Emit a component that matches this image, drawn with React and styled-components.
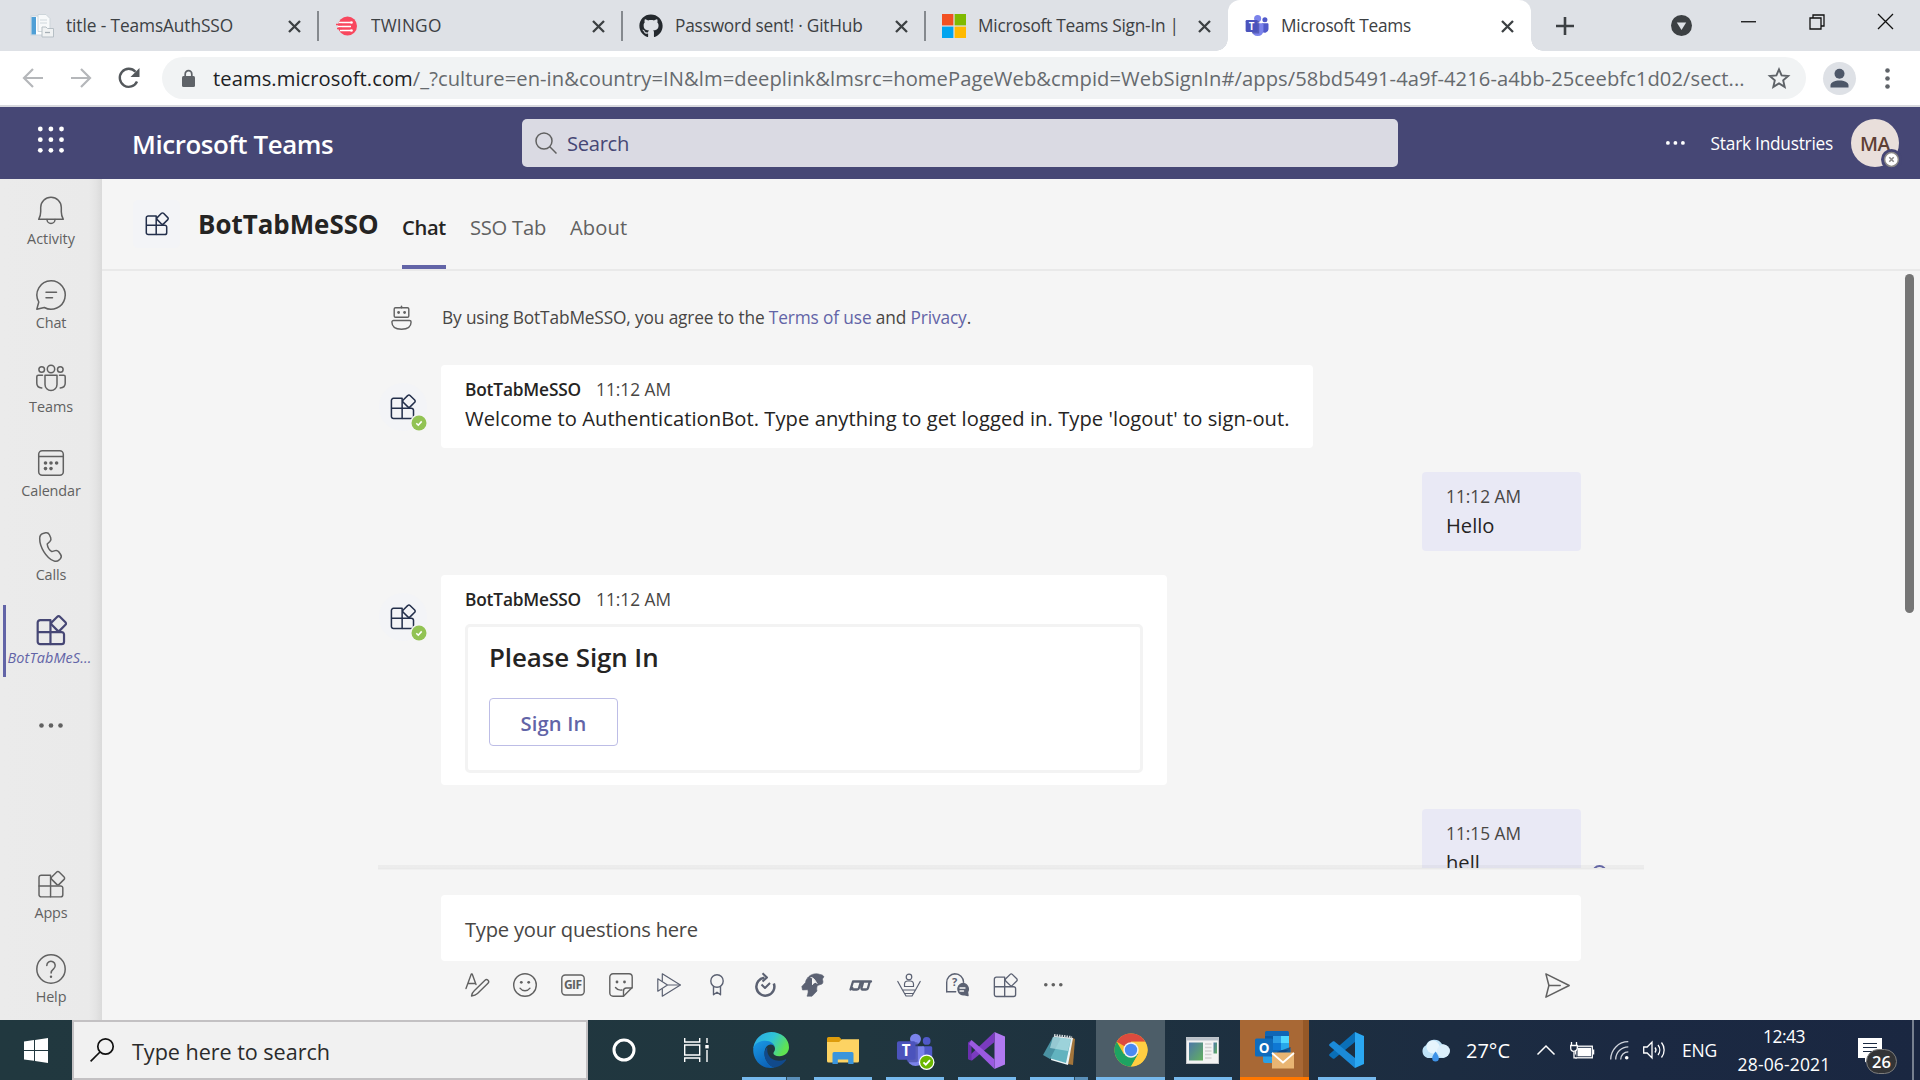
import React from "react";
import styled, { createGlobalStyle, css } from "styled-components";
import { FaGithub } from "react-icons/fa";

const Global = createGlobalStyle`
  * { box-sizing: border-box; }
  html, body { margin: 0; padding: 0; }
  body {
    width: 1920px; height: 1080px; overflow: hidden;
    font-family: "Open Sans", "Noto Sans", sans-serif;
    background: #f5f5f5;
  }
  svg { display: block; flex: none; overflow: visible; }
`;

const Screen = styled.div`
  width: 1920px;
  height: 1080px;
  display: flex;
  flex-direction: column;
  overflow: hidden;
`;

/* ---------- Browser chrome ---------- */
const TabStrip = styled.div`
  height: 51px;
  flex: none;
  display: flex;
  align-items: stretch;
  background: #dee1e6;
  padding-left: 15px;
`;
const BrowserTab = styled.div`
  position: relative;
  flex: none;
  width: ${(p) => p.$w || 303}px;
  display: flex;
  align-items: center;
  padding: 1px 17px 0 ${(p) => p.$pad || 17}px;
  gap: 12px;
  ${(p) =>
    p.$sep &&
    css`
      &::after {
        content: "";
        position: absolute;
        right: -1px;
        top: 11px;
        width: 2px;
        height: 30px;
        background: #85898e;
      }
    `}
  ${(p) =>
    p.$active &&
    css`
      background: #fff;
      border-radius: 12px 12px 0 0;
      &::before,
      &::after {
        content: "";
        position: absolute;
        bottom: 0;
        width: 12px;
        height: 12px;
      }
      &::before {
        left: -12px;
        background: radial-gradient(circle at 0 0, transparent 11.5px, #fff 12px);
      }
      &::after {
        right: -12px;
        background: radial-gradient(circle at 100% 0, transparent 11.5px, #fff 12px);
      }
    `}
`;
const Favicon = styled.div`
  width: 24px;
  height: 24px;
  flex: none;
`;
const TabTitle = styled.span`
  flex: 1;
  white-space: pre;
  overflow: hidden;
  font-size: 17.3px;
  line-height: 26px;
  margin-top: -1px;
  letter-spacing: ${(p) => p.$ls}px;
  color: #3c4043;
`;
const StripControls = styled.div`
  flex: 1;
  display: flex;
  align-items: flex-start;
`;
const NewTab = styled.div`
  width: 67px;
  height: 51px;
  display: flex;
  align-items: center;
  justify-content: center;
`;
const TabSearch = styled(NewTab)`
  width: 66px;
  margin-left: 50px;
`;
const CaptionButton = styled.div`
  width: 68.6px;
  height: 43px;
  display: flex;
  align-items: center;
  justify-content: center;
`;

const AddressBar = styled.div`
  height: 56px;
  flex: none;
  display: flex;
  align-items: center;
  background: #fff;
  border-bottom: 2px solid #d8d9de;
  padding-left: 21px;
`;
const NavIcons = styled.div`
  width: 141px;
  display: flex;
  gap: 24px;
`;
const UrlPill = styled.div`
  width: 1644px;
  height: 42px;
  border-radius: 21px;
  background: #f1f3f4;
  display: flex;
  align-items: center;
  padding: 0 15px 0 20px;
`;
const Url = styled.span`
  flex: 1;
  margin-left: 18px;
  font-size: 20.16px;
  letter-spacing: 0.071px;
  white-space: pre;
  color: #666a6e;
  b {
    font-weight: 400;
    color: #202124;
  }
`;
const Profile = styled.div`
  width: 33px;
  height: 33px;
  margin-left: 17px;
  border-radius: 50%;
  overflow: hidden;
  background: #dee1e6;
`;
const Kebab = styled.div`
  margin-left: 29px;
`;

/* ---------- Teams header ---------- */
const TeamsBar = styled.header`
  height: 72px;
  flex: none;
  display: flex;
  align-items: center;
  background: #464775;
  color: #fff;
  padding: 0 21px 0 37px;
`;
const Waffle = styled.div`
  width: 95px;
  padding-bottom: 6px;
`;
const Brand = styled.span`
  width: 390px;
  font-size: 25.9px;
  font-weight: 600;
  letter-spacing: -0.42px;
  padding-top: 2px;
`;
const SearchBox = styled.div`
  width: 876px;
  height: 48px;
  border-radius: 5px;
  background: #dadae3;
  display: flex;
  align-items: center;
  gap: 10px;
  padding-left: 13px;
  font-size: 20.16px;
  letter-spacing: -0.307px;
  color: #464775;
`;
const HeaderRight = styled.div`
  flex: 1;
  display: flex;
  align-items: center;
  justify-content: flex-end;
`;
const Org = styled.span`
  font-size: 17.3px;
  letter-spacing: -0.24px;
  margin: 0 18px 0 26px;
`;
const Avatar = styled.div`
  position: relative;
  width: 48px;
  height: 48px;
  border-radius: 50%;
  background: #e9dfdb;
  color: #5e4034;
  display: flex;
  align-items: center;
  justify-content: center;
  font-size: 19.5px;
  font-weight: 600;
  letter-spacing: -0.4px;
`;
const AvatarBadge = styled.div`
  position: absolute;
  right: -3px;
  bottom: -3px;
`;

/* ---------- Body ---------- */
const Body = styled.div`
  height: 841px;
  flex: none;
  display: flex;
`;
const Rail = styled.nav`
  width: 102px;
  flex: none;
  display: flex;
  flex-direction: column;
  gap: 12px;
  padding: 6px 0 5px;
  background: linear-gradient(90deg, #ebebeb 0, #eaeaea 89px, #e4e4e4 96px, #dadada 102px);
`;
const RailItem = styled.div`
  position: relative;
  height: 72px;
  flex: none;
  display: flex;
  flex-direction: column;
  align-items: center;
  padding-top: 11px;
  color: ${(p) => (p.$active ? "#464775" : "#616161")};
  margin-top: ${(p) => (p.$push ? "auto" : 0)};
  ${(p) =>
    p.$active &&
    css`
      padding-top: 10px;
      &::before {
        content: "";
        position: absolute;
        left: 3px;
        top: 0;
        width: 3px;
        height: 72px;
        background: #6264a7;
      }
    `}
`;
const RailLabel = styled.span`
  margin-top: ${(p) => (p.$active ? 2 : 3)}px;
  font-size: 14.4px;
  line-height: 20px;
  white-space: pre;
  letter-spacing: ${(p) => p.$ls}px;
  ${(p) =>
    p.$active &&
    css`
      font-style: italic;
      color: #6264a7;
      margin-left: -3px;
    `}
`;
const RailMore = styled.div`
  height: 72px;
  display: flex;
  align-items: center;
  justify-content: center;
`;

const Main = styled.main`
  flex: 1;
  display: flex;
  flex-direction: column;
  background: #f5f5f5;
  min-width: 0;
`;
const AppHeader = styled.div`
  height: 92px;
  flex: none;
  display: flex;
  align-items: stretch;
  border-bottom: 2px solid #e9e9e9;
  padding-left: 31px;
`;
const AppTile = styled.div`
  width: 47px;
  height: 48px;
  align-self: center;
  border-radius: 5px;
  background: #f3f4f7;
  display: flex;
  align-items: center;
  justify-content: center;
  color: #232f4b;
`;
const AppTitle = styled.h1`
  margin: 0 24px 0 18px;
  width: 180px;
  align-self: center;
  font-size: 25.9px;
  font-weight: 700;
  line-height: 36px;
  letter-spacing: 0;
  color: #252423;
`;
const AppTab = styled.div`
  display: flex;
  align-items: center;
  width: ${(p) => p.$w}px;
  margin-right: 24px;
  padding-top: 10px;
  border-bottom: 4px solid ${(p) => (p.$active ? "#6264a7" : "transparent")};
  font-size: 20.16px;
  white-space: pre;
  font-weight: ${(p) => (p.$active ? 600 : 400)};
  color: ${(p) => (p.$active ? "#252423" : "#616161")};
  letter-spacing: ${(p) => p.$ls}px;
`;

const ChatScroll = styled.div`
  height: 597px;
  flex: none;
  overflow: hidden;
  display: flex;
  justify-content: center;
  position: relative;
`;
const Scrollbar = styled.div`
  position: absolute;
  right: 6px;
  top: 3px;
  width: 9px;
  height: 339px;
  border-radius: 5px;
  background: #757575;
`;
const ChatColumn = styled.div`
  width: 1266px;
  display: flex;
  flex-direction: column;
  gap: 24px;
`;
const Intro = styled.div`
  height: 70px;
  flex: none;
  padding-top: 24px;
  display: flex;
  align-items: center;
  color: #616161;
`;
const Gutter = styled.div`
  width: 63px;
  flex: none;
  position: relative;
`;
const IntroGutter = styled(Gutter)`
  padding-left: 13px;
`;
const IntroText = styled.p`
  margin: 0;
  padding-left: 1px;
  font-size: 17.3px;
  line-height: 24px;
  letter-spacing: -0.134px;
  color: #484644;
`;
const Link = styled.a`
  color: #6264a7;
`;
const MessageRow = styled.div`
  display: flex;
  flex: none;
  justify-content: ${(p) => (p.$mine ? "flex-end" : "flex-start")};
  align-items: flex-start;
`;
const BotAvatar = styled.div`
  position: relative;
  width: 48px;
  height: 48px;
  margin-top: 18px;
  margin-left: 1px;
  border-radius: 50%;
  background: #f3f4f7;
  display: flex;
  align-items: center;
  justify-content: center;
  color: #232f4b;
`;
const Presence = styled.div`
  position: absolute;
  left: 31px;
  top: 31px;
`;
const Bubble = styled.div`
  width: ${(p) => p.$w}px;
  background: ${(p) => (p.$mine ? "#e9e9f5" : "#fff")};
  border-radius: 4px;
  padding: 12px 24px ${(p) => p.$pb}px;
`;
const Meta = styled.div`
  display: flex;
  gap: 15px;
  height: 24px;
  align-items: center;
  font-size: 17.3px;
  color: #484644;
`;
const Sender = styled.span`
  width: 116px;
  font-weight: 600;
  letter-spacing: -0.165px;
  color: #252423;
`;
const MessageText = styled.div`
  margin-top: 2px;
  font-size: 20.16px;
  line-height: 30px;
  white-space: pre;
  letter-spacing: ${(p) => p.$ls}px;
  color: #252423;
`;
const Card = styled.div`
  margin-top: 13px;
  height: 149px;
  border: 3px solid #f3f3f3;
  border-radius: 5px;
  padding: 12px 20px 0 21px;
`;
const CardTitle = styled.div`
  font-size: 25.9px;
  line-height: 36px;
  font-weight: 600;
  letter-spacing: -0.08px;
  color: #252423;
`;
const CardButton = styled.div`
  margin-top: 23px;
  width: 129px;
  height: 48px;
  border: 1.5px solid #bdbde6;
  border-radius: 4px;
  display: flex;
  align-items: center;
  justify-content: center;
  padding-top: 1px;
  font-size: 20.16px;
  font-weight: 600;
  letter-spacing: 0.16px;
  color: #6264a7;
`;
const Receipt = styled.div`
  width: 15px;
  height: 15px;
  margin: 56px 0 0 11px;
  border: 2px solid #6264a7;
  border-radius: 50%;
`;

const Composer = styled.section`
  flex: 1;
  width: 1266px;
  align-self: center;
  padding: 0 63px;
  display: flex;
  flex-direction: column;
`;
const Divider = styled.div`
  height: 5px;
  margin: -3px -63px 25px;
  position: relative;
  background: linear-gradient(180deg, rgba(120, 120, 120, 0.07) 0 3px, #e9e9e9 3px 4px, #f0f0f0 4px);
`;
const Input = styled.div`
  height: 66px;
  border-radius: 4px;
  background: #fff;
  display: flex;
  align-items: center;
  padding-left: 24px;
  padding-top: 2px;
  font-size: 20.16px;
  letter-spacing: -0.235px;
  color: #484644;
`;
const Tools = styled.div`
  height: 48px;
  padding: 0 0 0 12px;
  display: flex;
  align-items: center;
`;
const Tool = styled.div`
  width: 48px;
  height: 48px;
  display: flex;
  align-items: center;
  justify-content: center;
  color: ${(p) => (p.$c ? "#5b6172" : "#616161")};
  margin-left: ${(p) => (p.$end ? "auto" : 0)};
`;

/* ---------- Taskbar ---------- */
const Taskbar = styled.footer`
  height: 60px;
  flex: none;
  display: flex;
  background: linear-gradient(90deg, #21383f 0, #20363f 45%, #1d2f40 66%, #1b2942 85%, #1a2741 100%);
  color: #fff;
`;
const StartButton = styled.div`
  width: 72px;
  flex: none;
  display: flex;
  align-items: center;
  justify-content: center;
`;
const TaskSearch = styled.div`
  width: 516px;
  flex: none;
  border: 2px solid #c3c1c3;
  background: #f1f1f1;
  display: flex;
  align-items: center;
  gap: 18px;
  padding-left: 16px;
  color: #2b2b2b;
  font-size: 21.6px;
  letter-spacing: -0.04px;
  span {
    padding-top: 2px;
  }
`;
const TaskTools = styled.div`
  width: 148px;
  flex: none;
  display: flex;
`;
const TaskCell = styled.div`
  width: 72px;
  flex: none;
  display: flex;
  align-items: center;
  justify-content: center;
`;
const TaskApp = styled.div`
  width: 69px;
  margin-right: 3px;
  flex: none;
  display: flex;
  flex-direction: column;
  align-items: center;
  background: ${(p) => p.$bg || "transparent"};
  box-shadow: ${(p) => (p.$stack ? "inset -6px 0 0 rgba(90,40,0,.25)" : "none")};
`;
const TaskIcon = styled.div`
  height: 57px;
  padding-top: 3px;
  display: flex;
  align-items: center;
  justify-content: center;
`;
const Running = styled.div`
  height: 3px;
  width: ${(p) => (p.$full ? 69 : 58)}px;
  background: ${(p) =>
    p.$multi
      ? "linear-gradient(90deg, #76b9ed 0 44px, #2b4a5c 44px 45px, #5a8fb8 45px)"
      : p.$alert
      ? "#ff7700"
      : "#76b9ed"};
`;
const Tray = styled.div`
  flex: 1;
  display: flex;
  align-items: center;
  padding-left: 36px;
`;
const Temp = styled.span`
  width: 70px;
  margin-left: 15px;
  margin-right: 1px;
  font-size: 20px;
`;
const TraySlot = styled.div`
  width: ${(p) => p.$w}px;
  flex: none;
`;
const Lang = styled.span`
  width: 55px;
  font-size: 17.5px;
  letter-spacing: -0.2px;
`;
const Clock = styled.div`
  width: 94px;
  display: flex;
  flex-direction: column;
  align-items: center;
  font-size: 17.5px;
  line-height: 28px;
  letter-spacing: 0.15px;
  white-space: nowrap;
`;
const Time = styled.span`
  letter-spacing: -0.5px;
`;
const ActionCenter = styled.div`
  position: relative;
  width: 54px;
  margin-left: 27px;
`;
const Count = styled.div`
  position: absolute;
  left: 8px;
  top: 11px;
  width: 31px;
  height: 25px;
  border-radius: 13px;
  border: 1px solid #7c7c7c;
  background: #333436;
  display: flex;
  align-items: center;
  justify-content: center;
  font-size: 16.5px;
  font-weight: 600;
`;
const ShowDesktop = styled.div`
  width: 8px;
  height: 60px;
  border-left: 2px solid #76808f;
`;

/* ---------- Icons ---------- */
const Close = () => (
  <svg width="13" height="13" viewBox="0 0 13 13" stroke="#3c4043" strokeWidth="2.3">
    <path d="M1 1l11 11M12 1L1 12" />
  </svg>
);

const Blocks = ({ size = 24, sw = 1.3 }) => (
  <svg width={size} height={size} viewBox="0 0 24 24" fill="none" stroke="currentColor" strokeWidth={sw} strokeLinejoin="round">
    <path d="M3.200 4h8v18.600H3.200a1.900 1.900 0 0 1-1.900-1.900V5.900A1.900 1.900 0 0 1 3.200 4z" />
    <path d="M1.300 13.200h18.500a1.900 1.900 0 0 1 1.900 1.900v5.600a1.900 1.900 0 0 1-1.900 1.900h-8.600" />
    <path d="M16.500 1.300a1.400 1.400 0 0 1 2 0l4.300 4.300a1.400 1.400 0 0 1 0 2l-4.300 4.300a1.400 1.400 0 0 1-2 0l-4.300-4.300a1.400 1.400 0 0 1 0-2z" />
  </svg>
);

const TeamsLogo = ({ size, badge }) => (
  <svg width={size} height={size} viewBox="0 0 38 38">
    <circle cx="31.500" cy="9.200" r="4" fill="#5059c9" />
    <circle cx="20" cy="7.300" r="5.600" fill="#7b83eb" />
    <path d="M27 14.600h8.600c.9 0 1.600.7 1.600 1.600v8a5.600 5.600 0 0 1-10.200 3z" fill="#5059c9" />
    <path d="M11 14.600h16.600c.9 0 1.600.7 1.600 1.600v10.800a9.200 9.200 0 0 1-18.200 0z" fill="#7b83eb" />
    <rect x="11" y="10.500" width="11.500" height="20.500" rx="1.500" fill="#3b3f91" opacity=".55" />
    <rect x="1" y="9.500" width="19" height="19" rx="1.800" fill="#4b53bc" />
    <text x="10.500" y="24.600" fontSize="15.500" fontWeight="700" fontFamily="Open Sans" textAnchor="middle" fill="#fff">T</text>
    {badge && (
      <g>
        <circle cx="31.500" cy="31" r="8" fill="#fff" />
        <circle cx="31.500" cy="31" r="6.700" fill="#6bb700" />
        <path d="M28.200 31.200l2.400 2.400 4.300-4.600" fill="none" stroke="#fff" strokeWidth="1.900" />
      </g>
    )}
  </svg>
);

const DocIcon = () => (
  <svg width="24" height="24" viewBox="0 0 24 24">
    <rect x="1" y="2" width="15" height="19" fill="#fff" stroke="#c9d3db" />
    <rect x="1.500" y="3" width="4.500" height="17.500" fill="#4f9fd6" />
    <path d="M8 .5h8l4 4v13H8z" fill="#f7f9fa" stroke="#cdd5da" />
    <path d="M10 6h7M10 9h7" stroke="#d0d8dd" />
    <path d="M12 13h4l1.500 1.500h6v8.500H12z" fill="#f0f2f3" stroke="#b6bfc5" />
    <path d="M15 18.500h5" stroke="#a5aeb5" strokeWidth="1.300" />
  </svg>
);

const TwingoIcon = () => (
  <svg width="24" height="24" viewBox="0 0 24 24">
    <circle cx="12.500" cy="12" r="9.500" fill="#f8475e" />
    <path d="M4 8.500h12M3 12.500h13M5 16.500h11" stroke="#fff" strokeWidth="1.500" />
    <circle cx="16.500" cy="8.500" r="1.300" fill="#fff" />
    <circle cx="16.500" cy="16.500" r="1.300" fill="#fff" />
    <path d="M1 10.500h6M2 14.500h5" stroke="#f8475e" strokeWidth="1.500" />
  </svg>
);

const MsIcon = () => (
  <svg width="24" height="24" viewBox="0 0 24 24">
    <path fill="#f25022" d="M0 0h11.400v11.400H0z" />
    <path fill="#7fba00" d="M12.600 0H24v11.400H12.600z" />
    <path fill="#00a4ef" d="M0 12.600h11.400V24H0z" />
    <path fill="#ffb900" d="M12.600 12.600H24V24H12.600z" />
  </svg>
);

const line = { fill: "none", stroke: "currentColor", strokeWidth: 1.5, strokeLinejoin: "round", strokeLinecap: "round" };
const RailSvg = ({ children }) => (
  <svg width="30" height="30" viewBox="0 0 30 30" {...line}>
    {children}
  </svg>
);
const RailIcons = {
  activity: (
    <RailSvg>
      <path d="M2.700 23.300h24.600c-1.600-2.800-2-4.600-2-7.500v-4.300a10.300 10.300 0 0 0-20.600 0v4.300c0 2.900-.4 4.700-2 7.500z" />
      <path d="M11 23.500a4 4 0 0 0 8 0" />
    </RailSvg>
  ),
  chat: (
    <RailSvg>
      <path d="M15 .8a14.200 14.200 0 1 1-6.700 26.700L.8 29.200 2.800 22A14.200 14.200 0 0 1 15 .8z" />
      <path d="M10 12.300h10.500M10 17.800h6.500" />
    </RailSvg>
  ),
  teams: (
    <RailSvg>
      <circle cx="15" cy="5" r="3.700" />
      <circle cx="5.700" cy="5.500" r="2.800" />
      <circle cx="24.300" cy="5.500" r="2.800" />
      <path d="M9 11.200h12v9.300a6 6 0 0 1-12 0z" />
      <path d="M6.500 11.200H2.300A1.500 1.500 0 0 0 .8 12.700v6.600c0 2.800 2 4.500 5 4.700M23.500 11.200h4.200a1.500 1.500 0 0 1 1.500 1.500v6.600c0 2.800-2 4.500-5 4.700" />
    </RailSvg>
  ),
  calendar: (
    <RailSvg>
      <rect x="2.700" y="2.700" width="24.600" height="24.600" rx="3.500" />
      <path d="M2.700 8.500h24.600" />
      <g fill="currentColor" stroke="none">
        <circle cx="9.500" cy="15" r="1.800" />
        <circle cx="15" cy="15" r="1.800" />
        <circle cx="20.600" cy="15" r="1.800" />
        <circle cx="9.500" cy="20.600" r="1.800" />
        <circle cx="15" cy="20.600" r="1.800" />
      </g>
    </RailSvg>
  ),
  calls: (
    <RailSvg>
      <path d="M7 1.400l2.600-.6c1.600-.4 3.100.4 3.800 1.900l1.300 3c.5 1.300.2 2.800-.8 3.800l-2.700 2.500c.3 2.700 2.300 6.200 4.600 7.600l3.400-1c1.300-.4 2.700.1 3.500 1.200l1.900 2.700c.9 1.300.8 3-.3 4.200l-1 1c-1.400 1.500-3.600 2-5.500 1.200C10 26 3.600 14.500 3.700 6.500c0-2.400 1.200-4.600 3.300-5.100z" />
    </RailSvg>
  ),
  apps: <Blocks size={28} sw={1.250} />,
  help: (
    <RailSvg>
      <circle cx="15" cy="15" r="14.200" />
      <path d="M10.800 11.500a4.200 4.200 0 1 1 6.800 3.300c-1.500 1.200-2.500 2-2.500 4.200" />
      <circle cx="15" cy="22.800" r="1.200" fill="currentColor" stroke="none" />
    </RailSvg>
  ),
  bot: <Blocks size={31} sw={1.700} />,
};

const ToolSvg = ({ children, ...p }) => (
  <svg width="24" height="24" viewBox="0 0 24 24" {...line} strokeWidth="1.400" {...p}>
    {children}
  </svg>
);
const Dots = ({ r = 1.6, gap = 7.5 }) => (
  <svg width={gap * 2 + r * 2} height={r * 2} fill="currentColor">
    <circle cx={r} cy={r} r={r} />
    <circle cx={r + gap} cy={r} r={r} />
    <circle cx={r + gap * 2} cy={r} r={r} />
  </svg>
);

const toolIcons = [
  [0, <ToolSvg key="f"><path d="M1 15.500L6.300 1h.9L11 11.500M3 10.500h7" /><path d="M9.500 17.500L20 7.300a2.100 2.100 0 0 1 3 3L12.500 20.500c-1.500 1.500-3.500 2.300-6 2.500.2-2.300 1.300-4 3-5.500z" /></ToolSvg>],
  [0, <ToolSvg key="e"><circle cx="12" cy="12" r="11.300" /><path d="M7 15.200c2.300 3.300 7.700 3.300 10 0" /><g fill="currentColor" stroke="none"><circle cx="8.300" cy="9.300" r="1.400" /><circle cx="15.700" cy="9.300" r="1.400" /></g></ToolSvg>],
  [0, <ToolSvg key="g"><rect x=".8" y="2" width="22.400" height="20" rx="3.500" /><text x="12" y="16.300" fontSize="12" fontWeight="700" stroke="none" fill="currentColor" textAnchor="middle" fontFamily="Open Sans" textLength="18">GIF</text></ToolSvg>],
  [0, <ToolSvg key="s"><path d="M4 .8h16a3.200 3.200 0 0 1 3.200 3.200v10.500l-8.700 8.700H4A3.200 3.200 0 0 1 .8 20V4A3.200 3.200 0 0 1 4 .8z" /><path d="M23 15h-5.500a3 3 0 0 0-3 3v5M6.500 14.500c1.500 2 4 3 6.500 2.500" /><g fill="currentColor" stroke="none"><circle cx="8" cy="9" r="1.400" /><circle cx="15.500" cy="9" r="1.400" /></g></ToolSvg>],
  [1, <ToolSvg key="m" strokeWidth="1.200"><path d="M5.300 8V.8L23.400 12 5.300 23.200V16" /><path d="M.8 5.800L10.500 12 .8 18.200zM10.500 12h12.500" /></ToolSvg>],
  [1, <ToolSvg key="p"><circle cx="12" cy="8" r="6.200" /><path d="M8.500 13.500v8.300l3.500-2.600 3.500 2.600v-8.300" /></ToolSvg>],
  [1, <ToolSvg key="u" strokeWidth="2.500" strokeLinecap="butt"><path d="M20.800 10.500A9 9 0 1 1 11.500 4.700" /><path d="M9.500.3l4.500 4.200-4.500 4M8.500 11.500l3.500 3.500 5-5" strokeWidth="2" /></ToolSvg>],
  [1, <ToolSvg key="d"><path d="M7 4.500C10 .5 16 0 19 1.500c2 .2 3.500 1 4 2.500-1 .8-1.500 1.500-1.500 2.700.8 1.800.5 3.500-.5 4.300l-4.500 1.500c-.8 1.500-1 3.500-.5 5.500l-5 5.200H6c1-2.500 1.500-4.500.8-6.500L1.500 17 .8 13.500 4.500 9.500C4.800 7.500 5.500 6 7 4.500z" fill="currentColor" strokeWidth=".6" /><path d="M10 4.500c2.500 0 3.500 2 6 6M14.500 9.500l-3-3.500v5.500" stroke="#f5f5f5" fill="#f5f5f5" strokeWidth="1" /></ToolSvg>],
  [1, <ToolSvg key="o" strokeWidth="2.300"><path d="M1.500 16.500L4 8.500h8L10 15c-.3 1-1 1.500-2 1.500H4.500c-1 0-1.500-.8-1.200-1.700M12 8.500h10M14.300 8.500L12.500 15c-.2 1 .2 1.500 1 1.500h3.500c1 0 1.800-.5 2-1.500l1.800-6.500" /></ToolSvg>],
  [1, <ToolSvg key="h" strokeWidth="1.200"><circle cx="12" cy="4" r="2.800" /><path d="M7.500 13.500v-2.200a3.300 3.300 0 0 1 3.300-3.300h2.400a3.300 3.300 0 0 1 3.300 3.300v2.200zM.8 8.500L5.500 17h13l4.700-8.500M5.500 17l3.500 6h6l3.500-6M8 20.500h8" /></ToolSvg>],
  [1, <ToolSvg key="q"><path d="M10 .8a8.800 8.800 0 0 1 8.600 8.500M1.700 19V9.600A8.600 8.600 0 0 1 10 .8M1.700 18.800h9" /><text x="9.500" y="12.500" fontSize="11" fontWeight="700" stroke="none" fill="currentColor" textAnchor="middle" fontFamily="Open Sans">?</text><path d="M17.500 10.500a5.700 5.700 0 0 1 5 8.600l.5 3.400-3.300-.8a5.700 5.700 0 1 1-2.200-11.200z" fill="currentColor" /><path d="M15 15h5M15 18h3.500" stroke="#f5f5f5" /></ToolSvg>],
  [1, <Blocks key="b" size={25} sw={1.3} />],
  [0, <Dots key="x" r={1.800} gap={7.500} />],
];

const Chrome = () => (
  <svg width="34" height="34" viewBox="0 0 34 34">
    <circle cx="17" cy="17" r="16.500" fill="#fbc02d" />
    <path d="M17 17L2.700 8.750A16.500 16.500 0 0 1 31.300 8.750H17z" fill="#dd4b3e" />
    <path d="M2.700 8.750A16.500 16.500 0 0 0 17 33.500l7.200-12.500L17 17 9.800 21z" fill="#1ea362" />
    <path d="M24.200 21L17 33.500A16.500 16.500 0 0 0 31.300 8.750H17z" fill="#ffcd42" />
    <circle cx="17" cy="17" r="7.700" fill="#f1f1f1" />
    <circle cx="17" cy="17" r="6.200" fill="#4a89f3" />
  </svg>
);

const Edge = () => (
  <svg width="36" height="36" viewBox="0 0 36 36">
    <defs>
      <linearGradient id="eg1" x1="0" y1="0" x2="1" y2=".4">
        <stop offset="0" stopColor="#2aa8e8" />
        <stop offset=".55" stopColor="#2fc3d8" />
        <stop offset="1" stopColor="#5fe352" />
      </linearGradient>
      <linearGradient id="eg2" x1="0" y1="0" x2=".5" y2="1">
        <stop offset="0" stopColor="#1a9be6" />
        <stop offset="1" stopColor="#0c63b8" />
      </linearGradient>
    </defs>
    <path d="M.3 16.500C1.300 7 8.800 0 18.200 0 28 0 36 6.600 36 15.200c0 5.200-4.200 9-9.600 9-4 0-6-1.400-6-2.900 0-1.200 1.600-1.900 1.600-4.600C22 13 18.500 10.500 14 10.500c-6 0-11 2.500-13.700 6z" fill="url(#eg1)" />
    <path d="M.2 18C.2 12.500 6 8.800 12.200 8.800c5.600 0 9.800 3.500 9.800 8 0-2.700-2-4.200-4.300-4.200-3.700 0-6.200 3.800-6.200 9 0 6.500 5 12.900 10.300 14C9 38.300.2 28.500.2 18z" fill="url(#eg2)" />
    <path d="M14.300 15c-2 2-2.800 4.500-2.800 7 0 6.500 5 12.500 10.500 13.600 4.600-.9 8.500-3.500 11-7.300.5-.8-.1-1.300-.9-.9-7 3-15.600.6-17.400-6.400-.5-2-.5-4.500-.4-6z" fill="#114a8b" />
  </svg>
);

const Folder = () => (
  <svg width="32" height="27" viewBox="0 0 32 27">
    <path d="M0 1.500A1.500 1.500 0 0 1 1.500 0h10.700l2.500 2.500V6H0z" fill="#dd9c0c" />
    <path d="M0 5h12l3-2.700h17V24a1.500 1.500 0 0 1-1.500 1.500h-29A1.500 1.500 0 0 1 0 24z" fill="#fdd363" />
    <path d="M5.500 27V16.500A1.500 1.500 0 0 1 7 15h18a1.500 1.500 0 0 1 1.500 1.500V27h-5.300v-4.500h-10.400V27z" fill="#3a95dd" />
  </svg>
);

const VisualStudio = () => (
  <svg width="37" height="37" viewBox="0 0 37 37">
    <path d="M26.500 0L37 4.500v28L26.500 37z" fill="#b179f1" />
    <path d="M26.500 0v10L4 28.500 0 27l1-3z" fill="#7a3bc0" />
    <path d="M0 10.500L3.500 8v20.800L0 27z" fill="#6a2fae" />
    <path d="M3.500 8L26.500 27.500V37L1 12z" fill="#9a5ae0" />
  </svg>
);

const Notepad = () => (
  <svg width="34" height="34" viewBox="0 0 34 34">
    <path d="M29 4l4 2-2 26-5-1z" fill="#a3753b" />
    <path d="M12 3l19 2-5 27-17-5z" fill="#eef5f7" />
    <path d="M11 4l18 2-5 24-17-5z" fill="#62b3bf" />
    <path d="M11 4L1 22l7 4L19 5z" fill="#4a92a3" />
    <path d="M11 4l18 2-3 12-18-3z" fill="#b5e0e6" opacity=".7" />
    <path d="M12 2.500l18 2" stroke="#cfd6d9" strokeWidth="3" strokeDasharray="1.500 1" />
  </svg>
);

const WindowApp = () => (
  <svg width="33" height="27" viewBox="0 0 33 27">
    <defs>
      <linearGradient id="wg" x1="0" y1="0" x2="1" y2="1">
        <stop offset="0" stopColor="#4d77a8" />
        <stop offset="1" stopColor="#62b05e" />
      </linearGradient>
    </defs>
    <rect x=".5" y=".5" width="32" height="26" fill="#f3f3f3" stroke="#c3c7ca" />
    <rect x=".5" y=".5" width="32" height="3" fill="#b9c1c9" />
    <rect x="3" y="5.500" width="14" height="18" fill="url(#wg)" />
    <path d="M19 7h6.500M19 10.500h6.500M19 14h6.500M19 17.500h6.500M19 21h6.500" stroke="#d2d2d2" strokeWidth="1.600" />
    <rect x="27.500" y="5.500" width="3.500" height="11" fill="url(#wg)" />
  </svg>
);

const Outlook = () => (
  <svg width="40" height="38" viewBox="0 0 40 38">
    <rect x="10" y="0" width="24" height="32" rx="1.500" fill="#1066b5" />
    <path d="M10 5h8v7h-8z" fill="#0a57a0" />
    <path d="M18 5h8v7h-8z" fill="#2a9be4" />
    <path d="M26 5h8v7h-8z" fill="#50d9ff" />
    <path d="M18 12h8v7h-8z" fill="#0f78d4" />
    <path d="M26 12h8v7h-8z" fill="#28a8ea" />
    <path d="M8 20l14 9L35.500 17v13a2 2 0 0 1-2 2H10a2 2 0 0 1-2-2z" fill="#2aa0e6" />
    <path d="M22 21l13.500-5v8H22z" fill="#123b6d" opacity=".7" />
    <rect x="0" y="7.500" width="18" height="18" rx="1.500" fill="#0f6cbd" />
    <text x="9" y="21.500" fontSize="13.500" fontWeight="700" fontFamily="Open Sans" fill="#fff" textAnchor="middle">O</text>
    <rect x="17" y="21.500" width="22" height="16" fill="#e9b573" />
    <path d="M17 22l11 9.500L39 22" fill="none" stroke="#fff" strokeWidth="1.800" />
  </svg>
);

const VsCode = () => (
  <svg width="36" height="36" viewBox="0 0 36 36">
    <path d="M26 0l9 4v28l-9 4z" fill="#2aa7f2" />
    <path d="M26 0v10L5.500 26.500c-.6.400-1.300.4-1.800 0L.6 23.900a1.200 1.200 0 0 1 0-1.900z" fill="#0a6fb8" />
    <path d="M26 36V26L5.500 9.500c-.6-.4-1.300-.4-1.800 0L.6 12.100a1.200 1.200 0 0 0 0 1.900z" fill="#1b8ad8" />
  </svg>
);

/* ---------- Data ---------- */
const tabs = [
  { t: "title - TeamsAuthSSO", ls: -0.1, icon: <DocIcon />, w: 303, pad: 15, sep: true },
  { t: "TWINGO", ls: 0.2, icon: <TwingoIcon />, w: 304, sep: true },
  { t: "Password sent! · GitHub", ls: -0.2, icon: <FaGithub size={24} color="#24292e" />, w: 303, sep: true },
  { t: "Microsoft Teams Sign-In |", ls: -0.25, icon: <MsIcon />, w: 303 },
  { t: "Microsoft Teams", ls: -0.252, icon: <TeamsLogo size={24} />, w: 303, active: true },
];
const rail = [
  { t: "Activity", ls: 0, icon: "activity" },
  { t: "Chat", ls: -0.1, icon: "chat" },
  { t: "Teams", ls: -0.05, icon: "teams" },
  { t: "Calendar", ls: -0.12, icon: "calendar" },
  { t: "Calls", ls: -0.1, icon: "calls" },
  { t: "BotTabMeS...", ls: 0.12, icon: "bot", active: true },
];

const BotIcon = () => (
  <svg width="21" height="24" viewBox="0 0 21 24" {...line} strokeWidth="1.400">
    <path d="M10.500.3v1.500" />
    <rect x="3.200" y="1.800" width="14.600" height="9.400" rx="1.300" />
    <path d="M2.500 14.500h16a1.600 1.600 0 0 1 1.600 1.600c0 5-4 7.200-9.600 7.200S.9 21.100.9 16.100a1.600 1.600 0 0 1 1.600-1.600z" />
    <g fill="currentColor" stroke="none">
      <circle cx="7.600" cy="6.500" r="1.400" />
      <circle cx="13.600" cy="6.500" r="1.400" />
    </g>
  </svg>
);

const Bot = () => (
  <Gutter>
    <BotAvatar>
      <Blocks size={26} sw={1.400} />
      <Presence>
        <svg width="18" height="18" viewBox="0 0 18 18">
          <circle cx="9" cy="9" r="9" fill="#f5f5f5" />
          <circle cx="9" cy="9" r="7.500" fill="#92c353" />
          <path d="M6.300 9.200l2 2 3.400-3.800" fill="none" stroke="#fff" strokeWidth="1.600" />
        </svg>
      </Presence>
    </BotAvatar>
  </Gutter>
);

export default function App() {
  return (
    <Screen>
      <Global />
      <TabStrip>
        {tabs.map((x) => (
          <BrowserTab key={x.t} $w={x.w} $pad={x.pad} $sep={x.sep} $active={x.active}>
            <Favicon>{x.icon}</Favicon>
            <TabTitle $ls={x.ls}>{x.t}</TabTitle>
            <Close />
          </BrowserTab>
        ))}
        <StripControls>
          <NewTab>
            <svg width="18" height="18" stroke="#3c4043" strokeWidth="2.600">
              <path d="M9 0v18M0 9h18" />
            </svg>
          </NewTab>
          <TabSearch>
            <svg width="21" height="21" viewBox="0 0 21 21">
              <circle cx="10.500" cy="10.500" r="10.500" fill="#3c4043" />
              <path d="M5.800 7.500h9.400l-4.700 7.500z" fill="#dee1e6" />
            </svg>
          </TabSearch>
          <CaptionButton>
            <svg width="15" height="1.500">
              <path d="M0 .75h15" stroke="#111" strokeWidth="1.300" />
            </svg>
          </CaptionButton>
          <CaptionButton>
            <svg width="16" height="16" fill="none" stroke="#111" strokeWidth="1.300">
              <path d="M1 4h11v11H1zM4 4V1h11v11h-3" />
            </svg>
          </CaptionButton>
          <CaptionButton>
            <svg width="15" height="15" stroke="#111" strokeWidth="1.300">
              <path d="M0 0l15 15M15 0L0 15" />
            </svg>
          </CaptionButton>
        </StripControls>
      </TabStrip>

      <AddressBar>
        <NavIcons>
          <svg width="24" height="24" viewBox="0 0 24 24" fill="none" stroke="#b5b7ba" strokeWidth="2.200">
            <path d="M22 12H3M12 3l-9 9 9 9" />
          </svg>
          <svg width="24" height="24" viewBox="0 0 24 24" fill="none" stroke="#b5b7ba" strokeWidth="2.200">
            <path d="M2 12h19M12 3l9 9-9 9" />
          </svg>
          <svg width="24" height="24" viewBox="0 0 24 24" fill="none" stroke="#54585c" strokeWidth="2.400">
            <path d="M20 15.500A9 9 0 1 1 18.500 5.800" />
            <path d="M22.500 2v9h-9z" fill="#54585c" stroke="none" />
          </svg>
        </NavIcons>
        <UrlPill>
          <svg width="13" height="17" viewBox="0 0 13 17">
            <rect x="0" y="6" width="13" height="11" rx="1.500" fill="#5f6368" />
            <path d="M3.200 7V4a3.300 3.300 0 0 1 6.600 0v3" fill="none" stroke="#5f6368" strokeWidth="1.700" />
          </svg>
          <Url>
            <b>teams.microsoft.com</b>/_?culture=en-in&amp;country=IN&amp;lm=deeplink&amp;lmsrc=homePageWeb&amp;cmpid=WebSignIn#/apps/58bd5491-4a9f-4216-a4bb-25ceebfc1d02/sect...
          </Url>
          <svg width="24" height="24" viewBox="0 0 24 24" fill="none" stroke="#5f6368" strokeWidth="1.900">
            <path d="M12 3.300l2.600 6.100 6.600.6-5 4.400 1.500 6.500L12 17.400l-5.700 3.500 1.500-6.500-5-4.400 6.600-.6z" />
          </svg>
        </UrlPill>
        <Profile>
          <svg width="33" height="33" viewBox="0 0 33 33" fill="#4d5768">
            <circle cx="16.500" cy="11.800" r="5" />
            <path d="M7.500 25.500v-2c0-3.500 4.500-5 9-5s9 1.500 9 5v2z" />
          </svg>
        </Profile>
        <Kebab>
          <svg width="5" height="21" fill="#5f6368">
            <circle cx="2.500" cy="2.500" r="2.300" />
            <circle cx="2.500" cy="10.500" r="2.300" />
            <circle cx="2.500" cy="18.500" r="2.300" />
          </svg>
        </Kebab>
      </AddressBar>

      <TeamsBar>
        <Waffle>
          <svg width="28" height="28" fill="#fff">
            {[3, 13.7, 24.3].map((y) => [3.3, 13.9, 24.5].map((x) => <circle key={x + "-" + y} cx={x} cy={y} r="2.400" />))}
          </svg>
        </Waffle>
        <Brand>Microsoft Teams</Brand>
        <SearchBox>
          <svg width="22" height="22" viewBox="0 0 22 22" fill="none" stroke="#616161" strokeWidth="1.500">
            <circle cx="9" cy="9" r="8" />
            <path d="M14.800 14.800l6.700 6.700" />
          </svg>
          Search
        </SearchBox>
        <HeaderRight>
          <Dots r={1.9} gap={7.5} />
          <Org>Stark Industries</Org>
          <Avatar>
            MA
            <AvatarBadge>
              <svg width="21" height="21" viewBox="0 0 21 21">
                <circle cx="10.500" cy="10.500" r="10.500" fill="#464775" />
                <circle cx="10.500" cy="10.500" r="6.900" fill="#fff" stroke="#8a8886" strokeWidth="1.500" />
                <path d="M8.300 8.300l4.400 4.400M12.700 8.300l-4.400 4.400" stroke="#8a8886" strokeWidth="1.600" />
              </svg>
            </AvatarBadge>
          </Avatar>
        </HeaderRight>
      </TeamsBar>

      <Body>
        <Rail>
          {rail.map((x) => (
            <RailItem key={x.t} $active={x.active}>
              {RailIcons[x.icon]}
              <RailLabel $ls={x.ls} $active={x.active}>
                {x.t}
              </RailLabel>
            </RailItem>
          ))}
          <RailMore>
            <svg width="24" height="5" fill="#616161">
              <circle cx="2.500" cy="2.500" r="2.300" />
              <circle cx="12" cy="2.500" r="2.300" />
              <circle cx="21.500" cy="2.500" r="2.300" />
            </svg>
          </RailMore>
          <RailItem $push>
            <RailSvg>
              <g transform="translate(1.500 .5)">{RailIcons.apps}</g>
            </RailSvg>
            <RailLabel $ls={-0.1}>Apps</RailLabel>
          </RailItem>
          <RailItem>
            {RailIcons.help}
            <RailLabel $ls={-0.1}>Help</RailLabel>
          </RailItem>
        </Rail>

        <Main>
          <AppHeader>
            <AppTile>
              <Blocks size={24} sw={1.500} />
            </AppTile>
            <AppTitle>BotTabMeSSO</AppTitle>
            <AppTab $active $w={44} $ls={-0.35}>Chat</AppTab>
            <AppTab $w={76} $ls={-0.24}>SSO Tab</AppTab>
            <AppTab $w={58} $ls={0.1}>About</AppTab>
          </AppHeader>

          <ChatScroll>
            <ChatColumn>
              <Intro>
                <IntroGutter>
                  <BotIcon />
                </IntroGutter>
                <IntroText>
                  By using BotTabMeSSO, you agree to the <Link>Terms of use</Link> and <Link>Privacy</Link>.
                </IntroText>
              </Intro>

              <MessageRow>
                <Bot />
                <Bubble $w={872} $pb={15}>
                  <Meta>
                    <Sender>BotTabMeSSO</Sender>
                    <span>11:12 AM</span>
                  </Meta>
                  <MessageText $ls={0.055}>
                    Welcome to AuthenticationBot. Type anything to get logged in. Type 'logout' to sign-out.
                  </MessageText>
                </Bubble>
              </MessageRow>

              <MessageRow $mine>
                <Bubble $mine $w={159} $pb={11}>
                  <Meta>11:12 AM</Meta>
                  <MessageText $ls={0}>Hello</MessageText>
                </Bubble>
                <Gutter />
              </MessageRow>

              <MessageRow>
                <Bot />
                <Bubble $w={726} $pb={12}>
                  <Meta>
                    <Sender>BotTabMeSSO</Sender>
                    <span>11:12 AM</span>
                  </Meta>
                  <Card>
                    <CardTitle>Please Sign In</CardTitle>
                    <CardButton>Sign In</CardButton>
                  </Card>
                </Bubble>
              </MessageRow>

              <MessageRow $mine>
                <Bubble $mine $w={159} $pb={11}>
                  <Meta>11:15 AM</Meta>
                  <MessageText $ls={0}>hell</MessageText>
                </Bubble>
                <Gutter>
                  <Receipt />
                </Gutter>
              </MessageRow>
            </ChatColumn>
            <Scrollbar />
          </ChatScroll>

          <Composer>
            <Divider />
            <Input>Type your questions here</Input>
            <Tools>
              {toolIcons.map(([c, icon], i) => (
                <Tool key={i} $c={c}>
                  {icon}
                </Tool>
              ))}
              <Tool $end>
                <svg width="25" height="25" viewBox="0 0 25 25" {...line}>
                  <path d="M.9.900L24.200 12.500.9 24.200l3-11.700z" />
                  <path d="M4.200 12.500h11" />
                </svg>
              </Tool>
            </Tools>
          </Composer>
        </Main>
      </Body>

      <Taskbar>
        <StartButton>
          <svg width="24" height="25" viewBox="0 0 24 25" fill="#fff">
            <path d="M0 3.500l10-1.400v9.800H0zM11 2l13-2v11.900H11zM0 13h10v9.800L0 21.500zM11 13h13v12l-13-1.900z" />
          </svg>
        </StartButton>
        <TaskSearch>
          <svg width="24" height="24" viewBox="0 0 24 24" fill="none" stroke="#111" strokeWidth="1.700">
            <circle cx="15.500" cy="8.500" r="7.700" />
            <path d="M10 14L.6 23.400" />
          </svg>
          <span>Type here to search</span>
        </TaskSearch>
        <TaskTools>
          <TaskCell>
            <svg width="24" height="24" fill="none" stroke="#fff" strokeWidth="3">
              <circle cx="12" cy="12" r="10" />
            </svg>
          </TaskCell>
          <TaskCell>
            <svg width="25" height="24" viewBox="0 0 25 24" fill="none" stroke="#fff" strokeWidth="1.400">
              <path d="M.7 0v4h15V0M.7 24v-4h15v4M.7 7h15v10H.7zM23 0v5M23 12v12" />
              <rect x="21.300" y="7" width="3.400" height="3.400" fill="#fff" stroke="none" />
            </svg>
          </TaskCell>
        </TaskTools>
        <TaskApp>
          <TaskIcon><Edge /></TaskIcon>
          <Running $multi />
        </TaskApp>
        <TaskApp>
          <TaskIcon><Folder /></TaskIcon>
          <Running />
        </TaskApp>
        <TaskApp>
          <TaskIcon><TeamsLogo size={37} badge /></TaskIcon>
          <Running />
        </TaskApp>
        <TaskApp>
          <TaskIcon><VisualStudio /></TaskIcon>
          <Running />
        </TaskApp>
        <TaskApp>
          <TaskIcon><Notepad /></TaskIcon>
          <Running $multi />
        </TaskApp>
        <TaskApp $bg="#4c5d68">
          <TaskIcon><Chrome /></TaskIcon>
          <Running $full />
        </TaskApp>
        <TaskApp>
          <TaskIcon><WindowApp /></TaskIcon>
          <Running />
        </TaskApp>
        <TaskApp $bg="#a86835" $stack>
          <TaskIcon><Outlook /></TaskIcon>
          <Running $full $alert />
        </TaskApp>
        <TaskApp>
          <TaskIcon><VsCode /></TaskIcon>
          <Running />
        </TaskApp>
        <Tray>
          <svg width="31" height="23" viewBox="0 0 31 23">
            <path d="M7.500 19A7 7 0 0 1 6 6.200 9 9 0 0 1 22 5a7.200 7.200 0 0 1 1.500 14z" fill="#bfe3f8" />
            <circle cx="13" cy="8" r="6.500" fill="#e6f5fd" />
            <circle cx="23.500" cy="12" r="6.500" fill="#dceffb" />
            <path d="M15.500 12.500c2 3 3.300 4.600 3.300 6.700a3.300 3.300 0 0 1-6.600 0c0-2.100 1.300-3.700 3.300-6.700z" fill="#3f93e8" />
          </svg>
          <Temp>27°C</Temp>
          <TraySlot $w={33}>
            <svg width="18" height="10" fill="none" stroke="#fff" strokeWidth="1.500">
              <path d="M.5 9.500L9 1l8.500 8.500" />
            </svg>
          </TraySlot>
          <TraySlot $w={40}>
            <svg width="25" height="17" viewBox="0 0 25 17">
              <rect x="5.700" y="4.200" width="16.600" height="11.600" fill="none" stroke="#fff" strokeWidth="1.300" />
              <rect x="7.500" y="5.800" width="13.500" height="8.500" fill="#fff" />
              <path d="M23.500 7.500v5" stroke="#fff" strokeWidth="1.500" />
              <path d="M1.500 0v3M6.500 0v3M.7 3.500h6.600v2.500a3.300 3.300 0 0 1-6.600 0zM4 9.500v6.300h3" fill="#1b2a42" stroke="#fff" strokeWidth="1.300" />
            </svg>
          </TraySlot>
          <TraySlot $w={33}>
            <svg width="19" height="19" viewBox="0 0 19 19" fill="none" stroke="#cfd4dc" strokeWidth="1.300">
              <path d="M.7 18.500C.7 8.700 8.500.7 18.300.7M5.700 18.500c0-7 5.600-12.700 12.600-12.700M10.700 18.500c0-4.200 3.400-7.700 7.600-7.700" />
              <circle cx="16.700" cy="16.700" r="1.800" fill="#fff" stroke="none" />
            </svg>
          </TraySlot>
          <TraySlot $w={39}>
            <svg width="23" height="18" viewBox="0 0 23 18" fill="none" stroke="#fff" strokeWidth="1.300">
              <path d="M.7 6h3.500L9 1v16l-4.800-5H.7zM12 6.500a4 4 0 0 1 0 5M15 4a8 8 0 0 1 0 10M18.500 1.500a12 12 0 0 1 0 15" />
            </svg>
          </TraySlot>
          <Lang>ENG</Lang>
          <Clock>
            <Time>12:43</Time>
            <span>28-06-2021</span>
          </Clock>
          <ActionCenter>
            <svg width="24" height="24" viewBox="0 0 24 24">
              <path d="M0 0h24v20h-12l-5 4.500V20H0z" fill="#fff" />
              <path d="M5 5.500h14M5 9.500h14M5 13.500h9" stroke="#1b2a42" strokeWidth="1.200" />
            </svg>
            <Count>26</Count>
          </ActionCenter>
          <ShowDesktop />
        </Tray>
      </Taskbar>
    </Screen>
  );
}
